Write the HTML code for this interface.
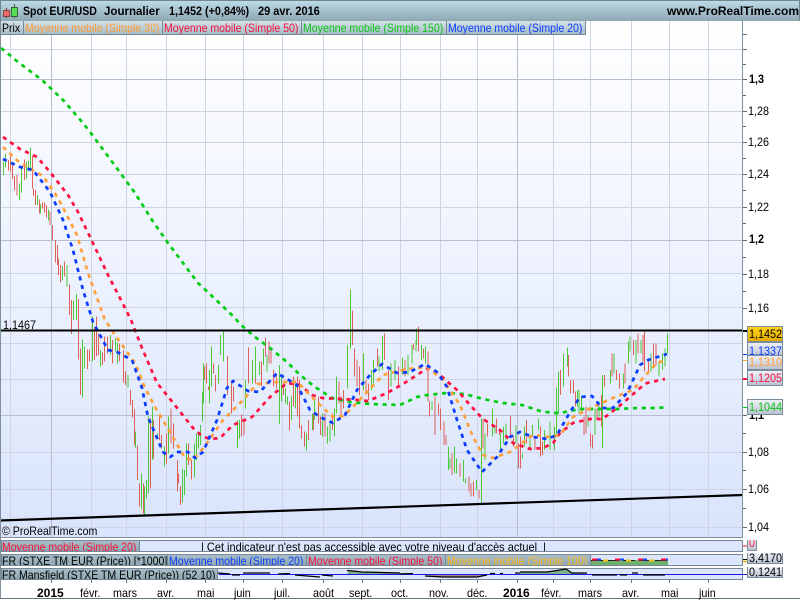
<!DOCTYPE html>
<html><head><meta charset="utf-8"><style>
html,body{margin:0;padding:0;background:#fff}
#r{position:relative;width:800px;height:600px;overflow:hidden;background:#fff;font-family:"Liberation Sans",sans-serif;font-size:12px;color:#000}
#r div{position:absolute;white-space:nowrap;box-sizing:border-box}
.s{display:inline-block;transform:scaleX(.88);transform-origin:0 50%}
.n{display:inline-block;transform:scaleX(.9);transform-origin:0 50%}
.lg{height:14px;top:21px;background:linear-gradient(#d4e2e9,#a6bcc6);border-right:1px solid #74899a;border-bottom:1px solid #74899a;line-height:14px;padding-left:1px;overflow:hidden}
.pn{left:1px;width:742px;background:#dbe5fb;border:1px solid #76899a;overflow:hidden}
.pl{top:0;height:12px;background:linear-gradient(#abc0ca,#8ea6b0);border-right:1px solid #76899a;line-height:14px;padding-left:1px;overflow:hidden}
.ax{left:748px;line-height:14px;transform:scaleX(.9);transform-origin:0 50%}
.b{left:749px;font-weight:bold;line-height:16px}
.bx{width:36px;left:747px;border:1px solid #7a8c9a;text-align:left;padding-left:1px;line-height:14px;background:linear-gradient(#eef1f8,#b9c2d2);overflow:hidden}
.t{top:580px;line-height:26px;transform:scaleX(.9);transform-origin:0 50%}
.y{top:580px;line-height:26px;font-weight:bold}
.h{top:3px;font-weight:bold;line-height:16px;transform-origin:0 50%}
</style></head><body><div id="r">
<div style="left:0;top:21px;width:743px;height:516px;background:linear-gradient(#fff,#d9e4fc)"></div>
<svg width="800" height="600" style="position:absolute;left:0;top:0" xmlns="http://www.w3.org/2000/svg">
<path shape-rendering="crispEdges" fill="none" stroke="#d0d3e2" d="M10.5 21V537M91.5 21V537M126.5 21V537M166.5 21V537M205.5 21V537M243.5 21V537M282.5 21V537M323.5 21V537M362.5 21V537M400.5 21V537M440.5 21V537M477.5 21V537M553.5 21V537M590.5 21V537M631.5 21V537M669.5 21V537M708.5 21V537M1 49.5H743M1 111.5H743M1 142.5H743M1 174.5H743M1 207.5H743M1 273.5H743M1 307.5H743M1 343.5H743M1 379.5H743M1 452.5H743M1 489.5H743M1 527.5H743"/>
<path shape-rendering="crispEdges" fill="none" stroke="#babdd0" d="M51.5 21V537M517.5 21V537M1 79.5H743M1 240.5H743M1 415.5H743"/>
<g fill="none" stroke-width="3" shape-rendering="crispEdges">
<g transform="translate(0,130) scale(.33333)">
<path stroke="#df5f5b" d="M25 90V122M31 80V125M38 100V147M44 138V182M51 135V197M73 88V150M97 78V175M101 175V198M107 180V225M118 208V250M127 218V235M133 218V248M139 225V262M150 245V285M158 285V332M166 330V398M172 345V405M175 385V435M181 405V458M193 395V440M208 463V555M214 510V570M235 507V570"/>
<path stroke="#4cc838" d="M10 95V135M17 70V112M58 160V210M65 115V188M79 95V145M85 92V125M91 52V125M112 195V225M122 222V250M145 238V272M187 408V452M201 405V470M221 512V570M229 492V570"/>
</g>
<g transform="translate(60,320) scale(.33333)">
<path stroke="#df5f5b" d="M34 -60V42M55 -60V118M61 85V225M82 88V147M88 88V125M103 22V120M109 -10V110M115 40V105M127 97V135M133 50V125M142 50V100M157 60V130M178 70V125M190 90V188M196 155V195M212 210V255M217 240V293M223 268V375M232 377V480M238 490V560M250 490V580M271 295V505M281 300V415M298 285V360M305 345V385M319 340V430M333 265V370M340 310V385M352 420V515M355 460V490M361 500V555M385 370V435M394 420V478M433 140V180M439 130V190M445 200V210M460 130V160M466 165V215M502 108V225M514 185V280M520 200V245M544 283V350M552 295V345M565 82V190M586 170V190M604 125V200M616 52V110M627 65V130M633 85V130M640 150V200M650 160V205M670 190V225M689 245V332M701 170V260M713 170V290M719 180V325M725 315V355M733 335V380M745 300V360M761 280V330M775 230V310"/>
<path stroke="#4cc838" d="M68 58V233M74 80V145M97 -10V125M121 90V140M151 45V105M166 55V95M172 68V130M204 165V203M226 335V382M244 460V565M253 500V590M259 480V535M265 290V520M277 260V420M292 340V350M313 380V440M325 290V400M367 447V548M373 450V525M379 370V470M403 370V472M409 340V420M415 340V385M421 315V375M427 215V305M430 130V250M448 150V250M454 80V200M476 135V190M481 45V105M490 35V125M532 300V385M538 300V355M557 180V265M578 120V190M586 80V175M598 125V165M610 85V135M621 105V155M659 135V312M665 165V245M677 205V250M683 230V255M695 230V300M707 195V265M739 340V392M757 280V330M764 240V300"/>
</g>
<g transform="translate(300,280) scale(.33333)">
<path stroke="#df5f5b" d="M62 410V465M75 400V470M98 400V450M117 305V370M123 350V410M130 330V385M158 92V195M164 205V290M171 238V320M178 260V345M198 300V345M206 310V360M232 205V260M253 160V240M265 270V360M295 260V320M315 240V290M340 190V210M355 140V215M370 205V235M384 215V365M389 365V410M405 350V465M416 370V405M422 385V450M432 425V495M438 465V495M456 520V585M480 550V590M507 590V635M513 610V650M520 605V650M537 630V655M549 415V505M563 430V470M590 415V460M598 445V465M631 408V470M640 470V500M655 490V565M661 470V565M680 420V490M705 470V510M721 440V530M728 485V525M782 270V345M806 225V290"/>
<path stroke="#4cc838" d="M68 400V470M83 440V490M90 430V485M103 385V470M110 290V400M143 195V325M152 28V205M190 220V330M214 270V330M220 240V310M237 230V275M248 168V270M273 250V320M285 240V300M307 232V285M324 225V285M336 195V250M348 180V215M350 145V195M364 195V240M376 200V250M396 365V390M445 500V570M450 535V565M463 500V580M470 535V580M490 540V605M497 595V610M530 600V630M544 415V670M555 460V540M578 385V470M585 435V460M602 460V510M610 440V490M618 430V480M648 435V490M667 520V535M673 440V500M690 470V510M698 435V470M716 415V450M733 450V510M750 425V510M763 440V510M770 322V470M776 275V400M791 222V320M802 202V260"/>
</g>
<g transform="translate(560,320) scale(.33333)">
<path stroke="#df5f5b" d="M31 180V220M40 180V220M46 215V260M72 290V345M78 260V340M92 340V380M98 345V385M111 265V300M124 225V320M134 165V200M156 100V170M170 150V180M178 160V205M195 130V190M220 60V105M234 40V100M249 45V125M253 35V155M265 120V160M281 70V140M288 70V135"/>
<path stroke="#4cc838" d="M52 210V260M57 210V280M64 230V280M84 285V320M105 265V345M117 245V290M128 165V385M151 150V190M162 100V160M190 160V205M205 65V130M210 50V95M228 60V130M243 60V100M273 100V155M297 125V170M307 100V150M315 85V140M322 40V100"/>
</g>
</g>
<g fill="none" stroke-width="2.7" stroke-dasharray="4.2 4.6" stroke-linejoin="round">
<polyline stroke="#00cc14" points="1,48 18,62 42,80 63,100 83,123 90,132 113,163 135,193 152,220 168,243 198,283 213,297 235,318 240,324 255,337 270,348 287,362 300,375 315,387 332,398 350,402 370,404 400,405 417,397 427,395 447,393 465,394 483,399 503,403 522,405 540,411 553,413 560,413 580,409 600,409 617,409 638,408 658,408 667,407"/>
<polyline stroke="#ff1040" points="3,137 20,149 37,157 50,172 68,195 78,212 91,239 108,275 122,302 131,320 142,348 157,383 170,399 193,428 202,436 210,439 220,438 233,425 252,417 270,397 287,383 300,385 312,395 322,398 342,399 358,400 368,401 387,393 403,384 420,373 428,368 440,375 457,390 470,405 483,419 500,430 513,443 530,449 543,448 553,443 560,433 573,423 590,419 602,419 608,415 623,403 640,388 647,383 665,379"/>
<polyline stroke="#ffa03c" points="3,147 20,163 43,176 58,198 77,235 88,273 105,320 115,335 135,363 145,388 155,407 170,432 185,458 193,460 205,446 223,420 243,400 257,384 277,382 297,382 320,405 333,417 343,416 352,408 367,392 383,375 407,369 427,367 443,380 460,405 473,437 483,455 493,458 510,452 533,435 550,437 560,435 573,417 593,407 615,397 633,390 643,378 657,363 666,360"/>
<polyline stroke="#0a3cff" points="3,159 20,167 33,170 50,192 63,220 73,250 83,290 93,322 108,350 117,352 132,360 142,388 148,417 163,452 170,457 178,452 188,452 195,458 203,452 217,420 227,388 233,381 248,391 260,392 277,373 297,385 310,410 320,417 333,423 345,415 357,390 370,375 382,364 397,373 410,372 425,364 437,372 447,387 457,420 467,450 482,472 497,457 510,437 520,432 533,437 547,439 557,435 570,412 580,397 592,396 602,408 613,408 627,393 640,365 648,360 667,354"/>
</g>
<path d="M1 330.5H743" stroke="#000" stroke-width="2" shape-rendering="crispEdges"/>
<path d="M0 520.5L743 495" stroke="#000" stroke-width="2.2"/>
<path shape-rendering="crispEdges" fill="none" stroke="#7d909c" d="M742.5 21V537M0.5 0V598M1 537.5H743"/>
<path shape-rendering="crispEdges" fill="none" stroke="#667" d="M743 34.5h4M743 49.5h4M743 64.5h3M743 79.5h4M743 95.5h3M743 111.5h4M743 126.5h3M743 142.5h4M743 158.5h3M743 174.5h4M743 190.5h3M743 207.5h4M743 223.5h3M743 240.5h4M743 257.5h3M743 274.5h4M743 291.5h3M743 308.5h4M743 415.5h4M743 433.5h3M743 452.5h4M743 470.5h3M743 489.5h4M743 508.5h3M743 527.5h4"/>
<path shape-rendering="crispEdges" stroke="#0a3cff" d="M743 354.5h4"/><path shape-rendering="crispEdges" stroke="#ffa03c" d="M743 360.5h4"/><path shape-rendering="crispEdges" stroke="#ff1040" stroke-width="2" d="M743 379h4"/><path shape-rendering="crispEdges" stroke="#00cc14" d="M743 407.5h4"/><path shape-rendering="crispEdges" stroke="#000" stroke-width="2" d="M743 331h5"/>
</svg>

<div style="left:0;top:0;width:800px;height:21px;background:linear-gradient(#bcdae7,#8ea7b3);border-top:1px solid #71878f;border-left:1px solid #71878f;border-right:1px solid #71878f"></div>
<svg width="20" height="20" style="position:absolute;left:2px;top:2px"><path d="M4.500 6V16" stroke="#733"/><rect x="1.500" y="8.500" width="6" height="6" fill="#ee6a66" stroke="#844"/><path d="M12.500 2V16" stroke="#363"/><rect x="9.500" y="5.500" width="6" height="9" fill="#58dc50" stroke="#363"/></svg>
<div class="h" style="left:23px;transform:scaleX(.88)">Spot EUR/USD</div>
<div class="h" style="left:104px;transform:scaleX(.96)">Journalier</div>
<div class="h" style="left:169px;transform:scaleX(.9)">1,1452 (+0,84%)</div>
<div class="h" style="left:258px;transform:scaleX(.917)">29 avr. 2016</div>
<div class="h" style="left:667px">www.ProRealTime.com</div>

<div class="lg" style="left:1px;width:23px;color:#000"><span class="s">Prix</span></div>
<div class="lg" style="left:24px;width:139px;color:#ff9c34"><span class="s">Moyenne mobile (Simple 30)</span></div>
<div class="lg" style="left:163px;width:139px;color:#f5103c"><span class="s">Moyenne mobile (Simple 50)</span></div>
<div class="lg" style="left:302px;width:145px;color:#0cc414"><span class="s">Moyenne mobile (Simple 150)</span></div>
<div class="lg" style="left:447px;width:139px;color:#0a3cff"><span class="s">Moyenne mobile (Simple 20)</span></div>

<div style="left:3px;top:319px;line-height:13px;transform:scaleX(.9);transform-origin:0 50%">1,1467</div>
<div style="left:2px;top:524px;line-height:14px;transform:scaleX(.885);transform-origin:0 50%">© ProRealTime.com</div>

<div class="ax b" style="top:71px">1,3</div>
<div class="ax" style="top:104px">1,28</div>
<div class="ax" style="top:135px">1,26</div>
<div class="ax" style="top:167px">1,24</div>
<div class="ax" style="top:200px">1,22</div>
<div class="ax b" style="top:231px">1,2</div>
<div class="ax" style="top:267px">1,18</div>
<div class="ax" style="top:301px">1,16</div>
<div class="ax b" style="top:407px">1,1</div>
<div class="ax" style="top:445px">1,08</div>
<div class="ax" style="top:482px">1,06</div>
<div class="ax" style="top:520px">1,04</div>

<div class="bx" style="top:326px;height:16px;background:linear-gradient(#ffd21a,#e4ac00)"><span class="n">1,1452</span></div>
<div class="bx" style="top:342px;height:15px;line-height:16px;color:#0a3cff"><span class="n">1,1337</span></div>
<div class="bx" style="top:355px;height:15px;line-height:13px;color:#ff9c34"><span class="n">1,1310</span></div>
<div class="bx" style="top:370px;height:16px;color:#f5103c"><span class="n">1,1205</span></div>
<div class="bx" style="top:399px;height:16px;color:#0cc414"><span class="n">1,1044</span></div>

<div class="pn" style="top:540px;height:12px"><div class="pl" style="left:-1px;width:139px;top:-1px;color:#f5103c"><span class="s">Moyenne mobile (Simple 20)</span></div>
<div style="left:199px;top:-1px;line-height:14px;transform:scaleX(.915);transform-origin:0 50%">| Cet indicateur n'est pas accessible avec votre niveau d'accès actuel&nbsp; |</div></div>
<div class="pn" style="top:554px;height:12px"><div class="pl" style="left:-1px;width:167px;top:-1px"><span class="s">FR (STXE TM EUR (Price)) [*1000]</span></div>
<div class="pl" style="left:166px;width:139px;top:-1px;color:#0a3cff"><span class="s">Moyenne mobile (Simple 20)</span></div>
<div class="pl" style="left:305px;width:139px;top:-1px;color:#f5103c"><span class="s">Moyenne mobile (Simple 50)</span></div>
<div class="pl" style="left:444px;width:145px;top:-1px;color:#ffb820"><span class="s">Moyenne mobile (Simple 100)</span></div></div>
<div class="pn" style="top:568px;height:12px"><div class="pl" style="left:-1px;width:217px;top:-1px"><span class="s">FR Mansfield (STXE TM EUR (Price)) (52 10)</span></div></div>
<svg width="800" height="600" style="position:absolute;left:0;top:0;pointer-events:none">
<rect x="591" y="560" width="77" height="5" fill="#6fb06c"/>
<path d="M591 560.500H668" stroke="#222" stroke-width="1" stroke-dasharray="12 4"/>
<path d="M592 559.500H668" stroke="#ff1040" stroke-width="2" stroke-dasharray="5 18"/>
<path d="M597 559.500H668" stroke="#2040ff" stroke-width="2" stroke-dasharray="4 19"/>
<path d="M603 560.500H668" stroke="#ffc020" stroke-width="2" stroke-dasharray="5 18"/>
<path d="M347 574L349 570.500 353 571 360 572 400 573 413 574zM520 574V572L547 572 560 570 566 569 572 573 587 574z" fill="#7fb087"/>
<path d="M425 575L443 577 477 577 487 575z" fill="#b08a90"/>
<path d="M219 574.500H743" stroke="#1a1adf" stroke-width="1" shape-rendering="crispEdges"/>
<path d="M218 573L230 574M232 575H240M243 573H270M278 574L290 573.500M295 575L320 577M322 575L333 576M347 570.500L353 571 362 572 400 573M400 574L413 573.500M425 576L443 577 477 577 487 575M490 573.500H495M500 573.500H503M515 573H520M520 572H547L560 570 566 569 572 573 587 573M592 575H617M620 575H627M632 573H638M643 575H665" fill="none" stroke="#000" stroke-width="1.200"/>
<path d="M743 546h4" stroke="#f5103c" stroke-width="1"/>
<path d="M743 559.500h4" stroke="#000" stroke-width="1"/><path d="M743 561.500h4" stroke="#e8b000" stroke-width="1.500"/>
<path d="M743 574.500h4" stroke="#1a1adf" stroke-width="1"/>
<path stroke="#65767f" fill="none" shape-rendering="crispEdges" d="M51.500 579v4M91.500 579v4M126.500 579v4M166.500 579v4M205.500 579v4M243.500 579v4M282.500 579v4M323.500 579v4M362.500 579v4M400.500 579v4M440.500 579v4M477.500 579v4M517.500 579v4M553.500 579v4M590.500 579v4M631.500 579v4M669.500 579v4M708.500 579v4M0 598.500H800"/>
</svg>
<div class="bx" style="top:540px;left:747px;width:10px;height:11px;color:#f5103c;line-height:6px;border-top:0"><span class="n">0</span></div>
<div class="bx" style="top:553px;height:11px;line-height:10px;border-top:0"><span class="n">3,4170</span></div>
<div class="bx" style="top:567px;height:11px;line-height:10px;border-top:0"><span class="n">0,1241</span></div>

<div class="y" style="left:37px">2015</div>
<div class="t" style="left:80px">févr.</div>
<div class="t" style="left:113px">mars</div>
<div class="t" style="left:157px">avr.</div>
<div class="t" style="left:197px">mai</div>
<div class="t" style="left:234px">juin</div>
<div class="t" style="left:274px">juil.</div>
<div class="t" style="left:313px">août</div>
<div class="t" style="left:349px">sept.</div>
<div class="t" style="left:391px">oct.</div>
<div class="t" style="left:429px">nov.</div>
<div class="t" style="left:467px">déc.</div>
<div class="y" style="left:503px">2016</div>
<div class="t" style="left:541px">févr.</div>
<div class="t" style="left:578px">mars</div>
<div class="t" style="left:622px">avr.</div>
<div class="t" style="left:661px">mai</div>
<div class="t" style="left:699px">juin</div>
</div></body></html>
